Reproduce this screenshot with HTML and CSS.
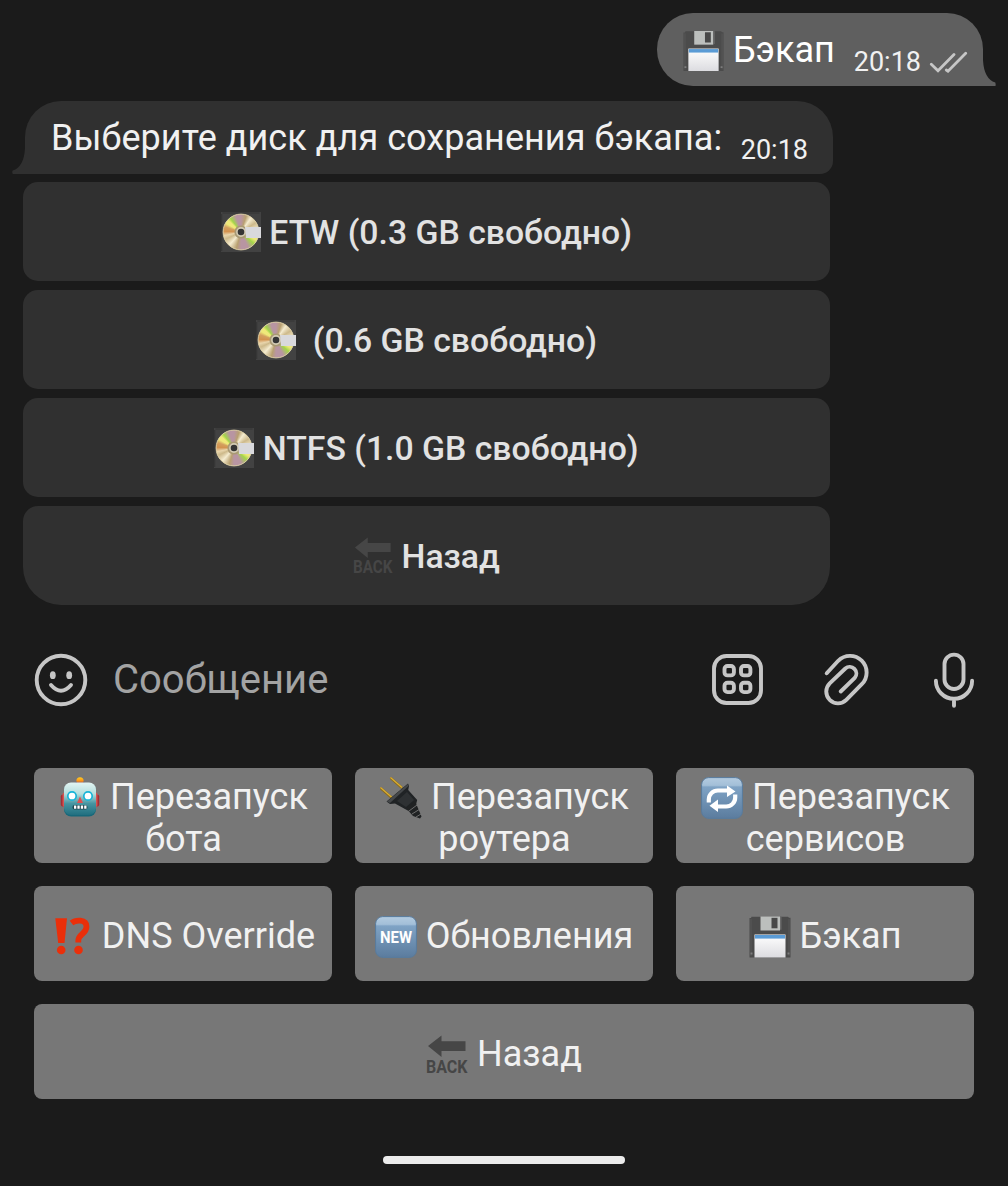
FILE: index.html
```html
<!DOCTYPE html>
<html lang="ru">
<head>
<meta charset="utf-8">
<title>Чат</title>
<link rel="stylesheet" href="styles.css">
</head>
<body>
<svg class="defs" width="0" height="0" aria-hidden="true">
  <defs>
    <linearGradient id="paper" x1="0" y1="0" x2="0" y2="1"><stop offset="0" stop-color="#fff"/><stop offset="1" stop-color="#dcdce0"/></linearGradient>
    <linearGradient id="tile" x1="0" y1="0" x2="0" y2="1"><stop offset="0" stop-color="#b3cbe0"/><stop offset=".19" stop-color="#a3bfd8"/><stop offset=".23" stop-color="#7fa3c5"/><stop offset="1" stop-color="#5b7c9e"/></linearGradient>
    <linearGradient id="robot" x1="0" y1="0" x2="0" y2="1"><stop offset="0" stop-color="#e2f5f3"/><stop offset=".35" stop-color="#b5dedd"/><stop offset=".65" stop-color="#4594a0"/><stop offset="1" stop-color="#216f80"/></linearGradient>
    <linearGradient id="knob" x1="0" y1="0" x2="0" y2="1"><stop offset="0" stop-color="#ffcf22"/><stop offset=".5" stop-color="#ff9416"/><stop offset="1" stop-color="#6a3a78"/></linearGradient>
    <symbol id="floppy" viewBox="0 0 42 42">
      <path d="M.5 2H2L2.500 .8H39L40 1.800H41.500V41.500H.5z" fill="#4b4b4b"/>
      <path d="M2 3v37M40 3v37" stroke="#5b5b5b" stroke-width=".8"/>
      <path d="M11.500 .5H31V14.500H11.500z" fill="#bcbfbd"/>
      <path d="M22.500 1.800h6v10.500h-6z" fill="#484848"/>
      <path d="M31 .8h1.500v13H31z" fill="#6a6a6a"/>
      <path d="M5.500 18.500h31v23h-31z" fill="url(#paper)"/>
      <path d="M6 19h30v3.600H6z" fill="#5a9bd5"/>
      <path d="M1.500 36.500h2v2h-2zM38.500 36.500h2v2h-2z" fill="#7c7c7c"/>
    </symbol>
    <symbol id="disc" viewBox="0 0 40 40">
      <path d="M0 0H40V40H0zM2 20a18 18 0 1 0 36 0a18 18 0 1 0-36 0z" fill="#424242" fill-rule="evenodd"/>
      <path d="M1.500 1h37M.7 2v37" stroke="#343434" stroke-width="1"/>
      <circle cx="20" cy="20" r="17.900" fill="none" stroke="#dfd1a7" stroke-width=".9"/>
      <circle cx="20" cy="20" r="6.600" fill="#a99973"/>
      <circle cx="20" cy="20" r="4.100" fill="#353535" stroke="#d3cbb4" stroke-width="1.600"/>
      <path d="M24 15h16v11H25z" fill="#d9d9dc"/>
    </symbol>
    <symbol id="back" viewBox="0 0 42 42">
      <path d="M2 12 15.500 1.500v5.800H39.500v9.600H15.500v6.100z" class="back-fill"/>
      <text x="0" y="38.800" textLength="41.500" lengthAdjust="spacingAndGlyphs" class="back-word">BACK</text>
    </symbol>
    <symbol id="robot-face" viewBox="0 0 42 42">
      <ellipse cx="21" cy="7" rx="5" ry="2.400" fill="#5b5380"/>
      <circle cx="21" cy="3.800" r="3.600" fill="url(#knob)"/>
      <rect x="1.800" y="17.500" width="38.400" height="12" rx="2" fill="#a12d35"/>
      <rect x="3.500" y="15.500" width="35" height="14.500" rx="2" fill="#d65350"/>
      <rect x="5" y="6.500" width="32" height="33" rx="7" fill="#17687a"/>
      <rect x="5" y="5.500" width="32" height="32.500" rx="7" fill="url(#robot)"/>
      <g fill="#fff" stroke="#17b4d8" stroke-width="1.700"><circle cx="13" cy="19" r="4.200"/><circle cx="29" cy="19" r="4.200"/></g>
      <path d="M21 19.500 24 26h-6z" fill="#e04f50"/>
      <rect x="13.500" y="28" width="15" height="4.500" rx="2" fill="#204850"/>
      <path d="M15 30.200h12.500" stroke="#fff" stroke-width="3.200" stroke-dasharray="2.300 1.100"/>
    </symbol>
    <symbol id="plug" viewBox="0 0 42 42">
      <path d="M.5 11 12 21M10.500 .8 22 11" stroke="#8b6b1c" stroke-width="2.400"/>
      <path d="M.5 10.500 12 20.500M10.500 .5 22 10.500" stroke="#d8ad34" stroke-width="1.300"/>
      <path d="M6.500 24.500 28 6.500l1 2.500-.8 4 9 10q-1 8-9.500 10.500L15 26.500l-5 .5z" fill="#202325"/>
      <path d="M7 24.500 28 7l.5 2L10 26z" fill="#45484a"/>
      <path d="m17 24 10-9 7 8-8 7z" fill="#2e3133"/>
      <path d="m26 31 9-7 6.500 15.500-1.500 2-7-2.500z" fill="#202223"/>
      <path d="m29 34 8-6m-5 9 8-5m-4 8 5-3" stroke="#777" stroke-width=".9"/>
    </symbol>
    <symbol id="repeat" viewBox="0 0 42 42">
      <rect x=".6" y=".6" width="40.800" height="40.800" rx="7" fill="url(#tile)" stroke="#587b9d" stroke-width="1"/>
      <path d="M7.800 25.500v-3a9 9 0 0 1 9-9H27M34.200 17.500v3a9 9 0 0 1-9 9H16" fill="none" stroke="#fff" stroke-width="4.200"/>
      <path d="M26 8.500 34.500 14.500 26 20zM17 22.500 8.500 28.800 17 35z" fill="#fff"/>
    </symbol>
    <symbol id="interrobang" viewBox="0 0 42 42">
      <g fill="#ea2f0a"><path d="M4.300 2.200H16L13.500 27H7.200z"/><circle cx="10.200" cy="34" r="4.300"/><circle cx="27.500" cy="34" r="4.300"/></g>
      <path d="M20.500 7c4-3.200 15-4.200 15 3.700 0 7-8.200 7.500-8.200 13.800V26.500" fill="none" stroke="#ea2f0a" stroke-width="5.800"/>
    </symbol>
    <symbol id="new" viewBox="0 0 42 42">
      <rect x=".6" y=".6" width="40.800" height="40.800" rx="7" fill="url(#tile)" stroke="#587b9d" stroke-width="1"/>
      <text x="5" y="27" textLength="32" lengthAdjust="spacingAndGlyphs" class="new-word">NEW</text>
    </symbol>
  </defs>
</svg>

<main class="screen">
  <section class="chat">
    <div class="bubble bubble-out">
      <span class="message"><svg class="emoji"><use href="#floppy"/></svg> Бэкап</span>
      <span class="time">20:18</span>
      <svg class="ticks" viewBox="0 0 40 22"><path d="m2.300 13.200 6.700 6.500L25 3.500M17.300 19l1.700 1.200L36.700 2.200"/></svg>
      <svg class="tail tail-out" viewBox="0 0 13 26"><path d="M0 0q1 19 12.300 22.500Q13 24 12.500 26H0z"/></svg>
    </div>
    <div class="bubble bubble-in">
      <span class="message">Выберите диск для сохранения бэкапа:</span>
      <span class="time">20:18</span>
      <svg class="tail tail-in" viewBox="0 0 13 26"><path d="M13 0Q12 19 .7 22.500-.2 24 .8 26H13z"/></svg>
    </div>
    <div class="choices">
      <button class="choice"><svg class="emoji disc"><use href="#disc"/></svg> ETW (0.3 GB свободно)</button>
      <button class="choice"><svg class="emoji disc"><use href="#disc"/></svg> &nbsp;(0.6 GB свободно)</button>
      <button class="choice"><svg class="emoji disc"><use href="#disc"/></svg> NTFS (1.0 GB свободно)</button>
      <button class="choice"><svg class="emoji"><use href="#back"/></svg> Назад</button>
    </div>
  </section>

  <section class="composer">
    <svg class="tool smile" viewBox="0 0 54 54"><circle cx="27" cy="27" r="24.300"/><path d="M17 32q10 11.500 20 0"/><g class="solid"><ellipse cx="18.800" cy="22.200" rx="2.900" ry="3.900"/><ellipse cx="35.200" cy="22.200" rx="2.900" ry="3.900"/></g></svg>
    <span class="placeholder">Сообщение</span>
    <svg class="tool grid" viewBox="0 0 54 54"><rect x="3" y="3" width="47" height="47" rx="12.500"/><rect x="13.500" y="13" width="9.400" height="9.400" rx="3"/><rect x="30" y="13" width="9.400" height="9.400" rx="3"/><rect x="13.500" y="29.700" width="9.400" height="9.400" rx="3"/><rect x="30" y="29.700" width="9.400" height="9.400" rx="3"/></svg>
    <svg class="tool clip" viewBox="820 653 54 54"><path d="M826.700 673.300 838.200 660.800A16.600 16.600 0 0 1 861.800 684.200L846.300 699.900A11.700 11.700 0 0 1 829.700 683.300L845.300 668.500A6.700 6.700 0 0 1 854.700 678L840.700 691.500"/></svg>
    <svg class="tool mic" viewBox="927 650 54 60"><rect x="944.500" y="654.600" width="19" height="34.400" rx="9.500"/><path d="M935.900 680.700a18.100 18.100 0 0 0 36.200 0M954 698.800v7"/></svg>
  </section>

  <section class="keyboard">
    <button class="key double"><svg class="emoji"><use href="#robot-face"/></svg> Перезапуск<br>бота</button>
    <button class="key double"><svg class="emoji"><use href="#plug"/></svg> Перезапуск<br>роутера</button>
    <button class="key double"><svg class="emoji"><use href="#repeat"/></svg> Перезапуск<br>сервисов</button>
    <button class="key"><svg class="emoji"><use href="#interrobang"/></svg> DNS Override</button>
    <button class="key"><svg class="emoji"><use href="#new"/></svg> Обновления</button>
    <button class="key"><svg class="emoji"><use href="#floppy"/></svg> Бэкап</button>
    <button class="key wide"><svg class="emoji"><use href="#back"/></svg> Назад</button>
  </section>
  <div class="home-bar"></div>
</main>
</body>
</html>
```
FILE: styles.css
```css
* { box-sizing: border-box; }

body {
  margin: 0;
  background: #1b1b1b;
  color: #f1f1f1;
  font-family: Roboto, "Noto Sans", sans-serif;
}

.defs { display: block; height: 0; }

.screen {
  display: flex;
  flex-direction: column;
  width: 1008px;
  height: 1186px;
  overflow: hidden;
}

.chat {
  display: flex;
  flex-direction: column;
  height: 626px;
  padding: 13px 25px 0;
}

.bubble {
  position: relative;
  display: flex;
  align-items: flex-start;
  height: 73px;
  padding: 16px 25px 0 26px;
  white-space: nowrap;
}

.bubble-out {
  align-self: flex-end;
  width: 326px;
  padding-right: 14px;
  background: #5f5f5f;
  border-radius: 36px 36px 0 36px;
  color: #fff;
}

.bubble-in {
  width: 808px;
  margin-top: 15px;
  background: #303030;
  border-radius: 36px 36px 13px 0;
}

.message {
  font-size: 36px;
  line-height: 42px;
}

.bubble-in .message { letter-spacing: .05px; }

.bubble-out .emoji { width: 41px; }

.time {
  margin: 17px 0 0 auto;
  font-size: 27px;
  line-height: 32px;
}

.bubble-out .time { color: #f1f1f1; }

.ticks {
  width: 40px;
  height: 22px;
  margin: 22px 0 0 8px;
  fill: none;
  stroke: #c6c6c6;
  stroke-width: 2.8;
  stroke-linecap: round;
}

.tail {
  position: absolute;
  bottom: 0;
  width: 13px;
  height: 26px;
}

.tail-out { left: 100%; fill: #5f5f5f; }
.tail-in { right: 100%; fill: #303030; }

.emoji {
  width: 42px;
  height: 42px;
  margin: -10px 0;
  vertical-align: baseline;
}

/* The sheen shows through the round opening of the disc symbol. */
.disc {
  background: conic-gradient(#b895a2 0deg, #b8a070 18deg, #f5ecd0 35deg, #cdb98a 58deg, #f3e8c7 80deg, #efe979 105deg, #efe979 118deg, #a4d649 132deg, #b895a2 155deg, #b895a2 180deg, #b8a070 196deg, #f5ecd0 222deg, #cdb98a 245deg, #e8d5ac 258deg, #d3924f 272deg, #d3a05f 288deg, #efe979 300deg, #efe979 312deg, #a4d649 322deg, #b895a2 342deg, #b895a2 360deg);
}

.back-fill { fill: #464646; }

.back-word {
  fill: #464646;
  font: 700 18.500px Roboto, sans-serif;
}

.new-word {
  fill: #fff;
  font: 700 16.500px Roboto, sans-serif;
}

.choices {
  display: flex;
  flex-direction: column;
  gap: 9px;
  width: 807px;
  margin: 8px 0 0 -2px;
}

.choice {
  height: 99px;
  padding: 2px 0 0;
  border: 0;
  border-radius: 15px;
  background: #303030;
  color: #e2e2e2;
  font: 500 33.750px/40px Roboto, sans-serif;
}

.choice:last-child { border-radius: 15px 15px 38px 38px; }

.choice .emoji {
  width: 40px;
  height: 40px;
  margin: -8px 0;
}

.composer {
  display: flex;
  align-items: center;
  height: 108px;
  padding: 0 27px 0 34px;
}

.tool {
  flex: none;
  width: 54px;
  height: 54px;
  fill: none;
  stroke: #c6c6c6;
  stroke-width: 3.900;
  stroke-linecap: round;
}

.tool .solid { fill: #c6c6c6; stroke: none; }
.grid { margin-left: auto; }
.clip { margin-left: 55px; }
.mic { height: 60px; margin-left: 53px; }

.placeholder {
  margin-left: 25px;
  color: #a3a3a3;
  font-size: 40px;
  line-height: 48px;
}

.keyboard {
  display: grid;
  grid-template-columns: repeat(3, 298px);
  grid-auto-rows: 95px;
  gap: 23px;
  padding: 34px 34px 0;
}

.key {
  padding: 4px 0 0;
  border: 0;
  border-radius: 8px;
  background: #777;
  color: #f1f1f1;
  font: 400 36px/42px Roboto, sans-serif;
  white-space: nowrap;
}

.double { padding: 5px 0 0 1px; }
.wide { grid-column: 1 / -1; }

.home-bar {
  width: 242px;
  height: 8px;
  margin: 57px auto 0;
  border-radius: 4px;
  background: #ececec;
}
```
